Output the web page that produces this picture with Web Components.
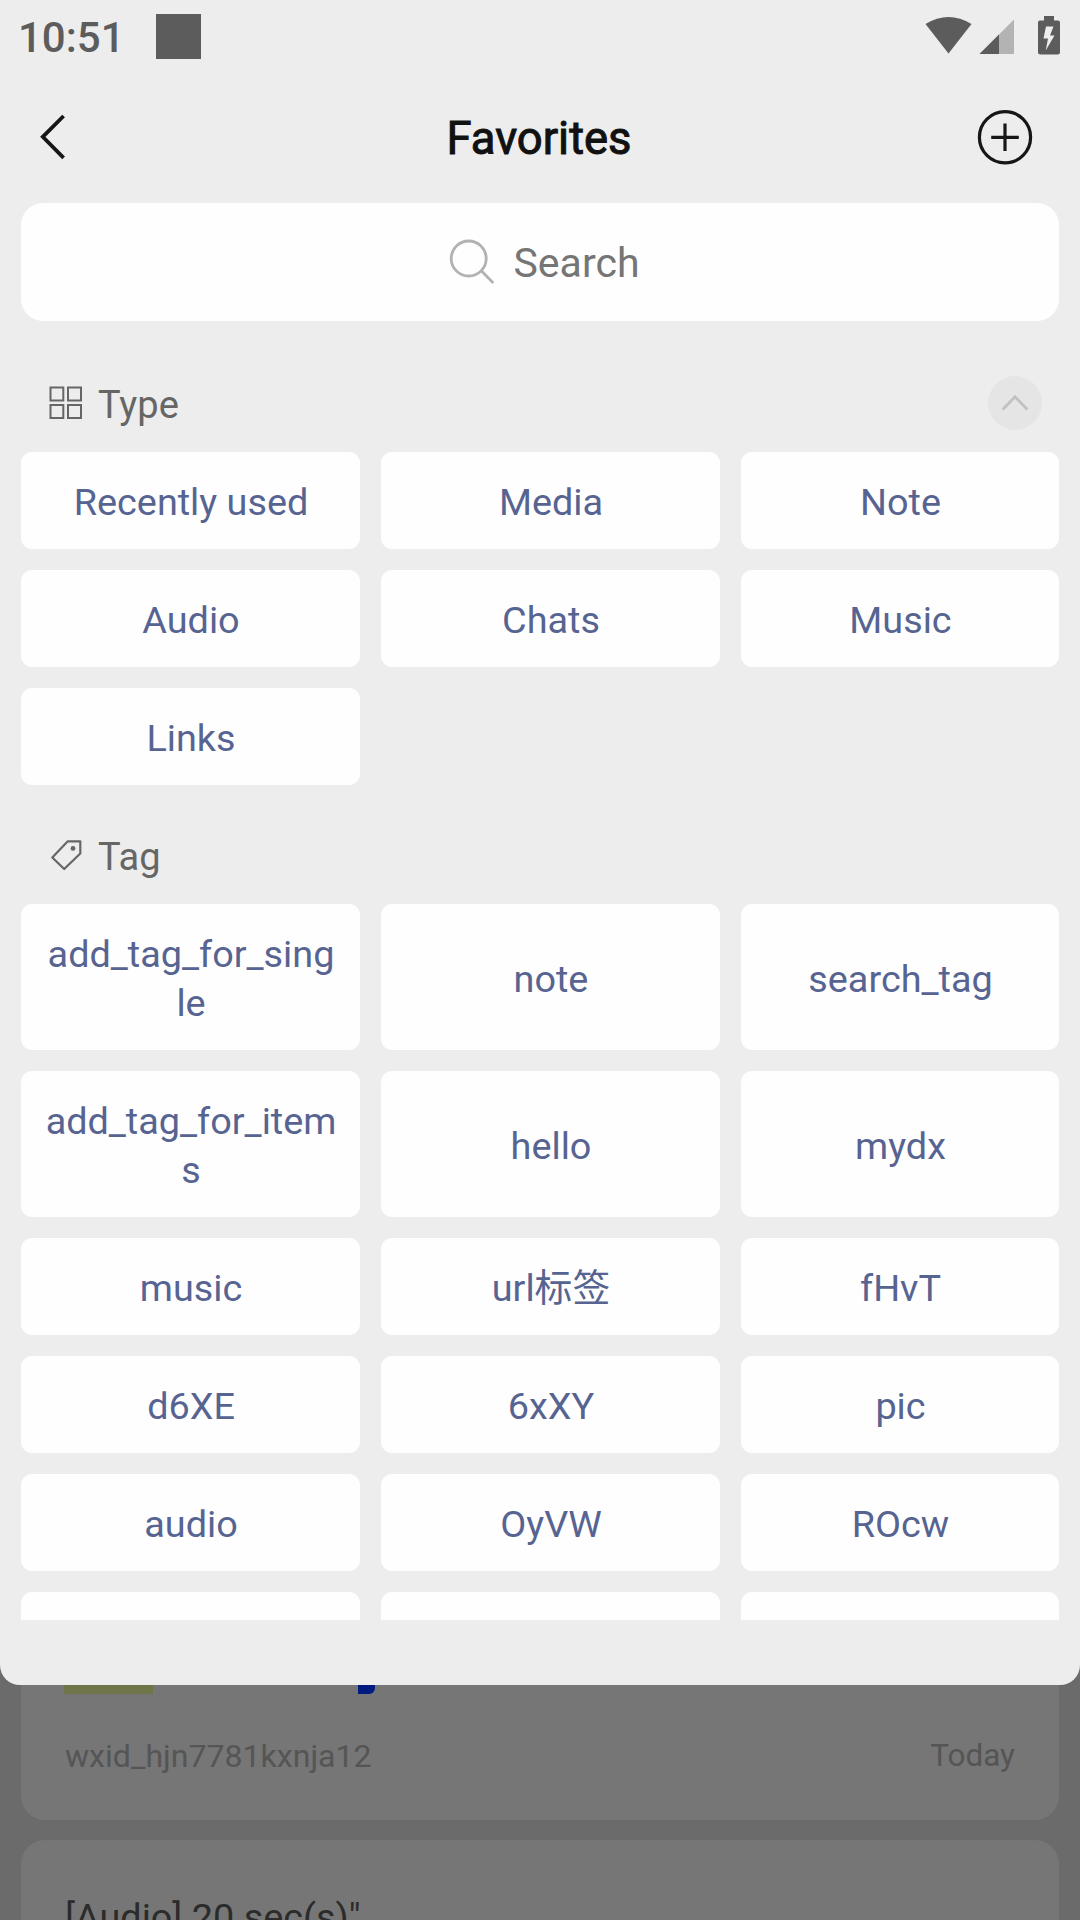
<!DOCTYPE html>
<html lang="en">
<head>
<meta charset="utf-8">
<title>Favorites</title>
<style>
  html, body { margin: 0; height: 1920px; overflow: hidden; background: #6b6b6b; }
  body { font-family: Roboto, "Noto Sans CJK SC", sans-serif; }
</style>
</head>
<body>
<favorites-page></favorites-page>
<script>
const define = (name, html) => customElements.define(name, class extends HTMLElement {
  constructor() {
    super();
    this.attachShadow({ mode: 'open' }).innerHTML = html;
  }
});

define('status-bar', `
<style>
  :host { display: flex; align-items: flex-start; height: 74px; box-sizing: border-box; padding: 14px 19px 0 18px; color: #5c5c5c; }
  time { font-weight: 500; font-size: 42px; line-height: 49px; margin-top: -1px; width: 138px; }
  .app { width: 45px; height: 45px; background: #5c5c5c; }
  svg { margin-left: auto; }
</style>
<time>10:51</time><span class="app"></span>
<svg width="137" height="42" viewBox="924 14 137 42" fill="#5c5c5c">
  <path d="M925.5 24Q948.5 10 971.5 24L948.5 53.5Z"/>
  <path d="M1014 19.5V54H979.5Z" fill="#b3b3b3"/>
  <path d="M999 34.5V54H979.5Z"/>
  <path fill-rule="evenodd" d="M1044 16H1054V20.500H1058Q1060 20.500 1060 22.500V52Q1060 54.500 1057.500 54.500H1040.500Q1038 54.500 1038 52V22.500Q1038 20.500 1040 20.500H1044ZM1046 26.500L1043.500 38.500H1048L1045.700 50.500L1054.500 35.500H1050L1053.500 26.500Z"/>
</svg>`);

define('nav-header', `
<style>
  :host { display: grid; grid-template-columns: 60px 1fr 60px; align-items: center; height: 129px; box-sizing: border-box; padding: 0 43px 4px 36px; color: #111; }
  h1 { margin: 0; font-weight: 400; -webkit-text-stroke: 1px #111; font-size: 45.400px; line-height: 54px; text-align: center; padding: 5px 0 0 5px; }
  svg { display: block; fill: none; stroke: #161616; }
  .add { justify-self: end; }
</style>
<svg width="34" height="52" viewBox="36.400 111 34 52" stroke-width="3.8"><path d="M64 116L43.200 136.800L64 157.800"/></svg>
<h1><slot></slot></h1>
<svg class="add" width="60" height="60" viewBox="977 107 60 60" stroke-width="3.2"><circle cx="1005" cy="137.300" r="25.600"/><path d="M1005 123.500V151M991.200 137.300H1018.800"/></svg>`);

define('search-field', `
<style>
  :host { display: flex; justify-content: center; align-items: center; height: 118px; box-sizing: border-box; padding-left: 8px; margin: 0 21px; border-radius: 22px; background: #fefefe; color: #757575; font-size: 41px; line-height: 48px; }
  svg { margin-right: 18px; }
  span { padding-top: 2px; }
</style>
<svg width="47" height="47" viewBox="449 239 47 47" fill="none" stroke="#b2b2b2" stroke-width="2.8"><circle cx="468.700" cy="258.500" r="17.500"/><path d="M481 270.500L493.300 283"/></svg>
<span><slot></slot></span>`);

define('filter-section', `
<style>
  :host { display: block; padding: 0 21px; }
  header { display: flex; align-items: center; height: 56px; padding: 0 17px 0 26px; color: #666; font-size: 38px; line-height: 45px; }
  .icon { display: flex; width: 51px; }
  .label { flex: 1; padding-top: 4px; }
  .grid { display: grid; grid-template-columns: 339px 339px 318px; gap: 21px; margin-top: 21px; }
</style>
<header><span class="icon"><slot name="icon"></slot></span><span class="label"><slot name="label"></slot></span><slot name="action"></slot></header>
<div class="grid"><slot></slot></div>`);

define('filter-chip', `
<style>
  :host { display: flex; align-items: center; justify-content: center; min-height: 97px; box-sizing: border-box; padding: 26px 23px 22px 24px; border-radius: 11px; background: #fefefe; color: #576492; font-size: 37.800px; line-height: 49px; text-align: center; word-break: break-all; }
</style>
<span><slot></slot></span>`);

define('grid-icon', `
<style>:host, svg { display: block; }</style>
<svg width="36" height="36" viewBox="47 385 36 36" fill="none" stroke="#666" stroke-width="2"><path d="M50.500 387.500h12.800v13h-12.800zM68 387.500h13v13h-13zM50.500 405h12.800v13h-12.800zM68 405h13v13h-13z"/></svg>`);

define('tag-icon', `
<style>:host, svg { display: block; }</style>
<svg width="36" height="36" viewBox="47 837 36 36" fill="none" stroke="#666" stroke-width="2.200" stroke-linejoin="round"><path d="M52.300 857.500L67.800 841.300H80.300V853.500L64.200 869Z"/><circle cx="73" cy="848.400" r="2.400" fill="#666" stroke="none"/></svg>`);

define('collapse-button', `
<style>:host, svg { display: block; }</style>
<svg width="54" height="54" viewBox="0 0 54 54"><circle cx="27" cy="27" r="27" fill="#e5e5e5"/><path d="M14.700 33.500L27 20.800L39.300 33.500" fill="none" stroke="#c1c1c1" stroke-width="2.800"/></svg>`);

define('filter-sheet', `
<style>
  :host { display: block; height: 1685px; box-sizing: border-box; overflow: hidden; background: #ededed; border-radius: 0 0 20px 20px; }
  .scroll { height: 1245px; box-sizing: border-box; margin-top: 54px; overflow: hidden; }
  filter-section + filter-section { margin-top: 42px; }
</style>
<status-bar></status-bar>
<nav-header>Favorites</nav-header>
<search-field>Search</search-field>
<div class="scroll">
  <filter-section>
    <grid-icon slot="icon"></grid-icon><span slot="label">Type</span><collapse-button slot="action"></collapse-button>
    <filter-chip>Recently used</filter-chip><filter-chip>Media</filter-chip><filter-chip>Note</filter-chip>
    <filter-chip>Audio</filter-chip><filter-chip>Chats</filter-chip><filter-chip>Music</filter-chip>
    <filter-chip>Links</filter-chip>
  </filter-section>
  <filter-section>
    <tag-icon slot="icon"></tag-icon><span slot="label">Tag</span>
    <filter-chip>add_tag_for_single</filter-chip><filter-chip>note</filter-chip><filter-chip>search_tag</filter-chip>
    <filter-chip>add_tag_for_items</filter-chip><filter-chip>hello</filter-chip><filter-chip>mydx</filter-chip>
    <filter-chip>music</filter-chip><filter-chip>url标签</filter-chip><filter-chip>fHvT</filter-chip>
    <filter-chip>d6XE</filter-chip><filter-chip>6xXY</filter-chip><filter-chip>pic</filter-chip>
    <filter-chip>audio</filter-chip><filter-chip>OyVW</filter-chip><filter-chip>ROcw</filter-chip>
    <filter-chip></filter-chip><filter-chip></filter-chip><filter-chip></filter-chip>
  </filter-section>
</div>`);

define('favorite-card', `
<style>
  :host { display: block; margin: 0 21px; padding: 0 43px; background: #767676; color: #2b2b2b; font-size: 37.800px; box-sizing: border-box; }
  :host([tail]) { height: 155px; margin-top: -20px; border-radius: 0 0 24px 24px; }
  :host([head]) { height: 100px; margin-top: 20px; border-radius: 24px 24px 0 0; padding: 50px 44px 0; line-height: 54px; }
</style>
<slot></slot>`);

define('card-preview', `
<style>
  :host { display: flex; height: 29px; }
  .a { width: 89px; background: #6f7548; }
  .b { width: 17px; margin-left: 205px; background: #001b80; border-radius: 0 0 6px 0; }
</style>
<span class="a"></span><span class="b"></span>`);

define('card-meta', `
<style>
  :host { display: flex; justify-content: space-between; margin-top: 42px; padding: 0 1px; font-size: 32.100px; line-height: 40px; color: #555; }
  ::slotted([slot=date]) { font-size: 31.500px; }
</style>
<slot name="source"></slot><slot name="date"></slot>`);

define('favorites-page', `
<style>
  :host { display: block; width: 1080px; height: 1920px; overflow: hidden; background: #6b6b6b; }
  filter-sheet { position: relative; z-index: 1; }
</style>
<filter-sheet></filter-sheet>
<favorite-card tail>
  <card-preview></card-preview>
  <card-meta><span slot="source">wxid_hjn7781kxnja12</span><span slot="date">Today</span></card-meta>
</favorite-card>
<favorite-card head>[Audio] 20 sec(s)"</favorite-card>`);
</script>
</body>
</html>
